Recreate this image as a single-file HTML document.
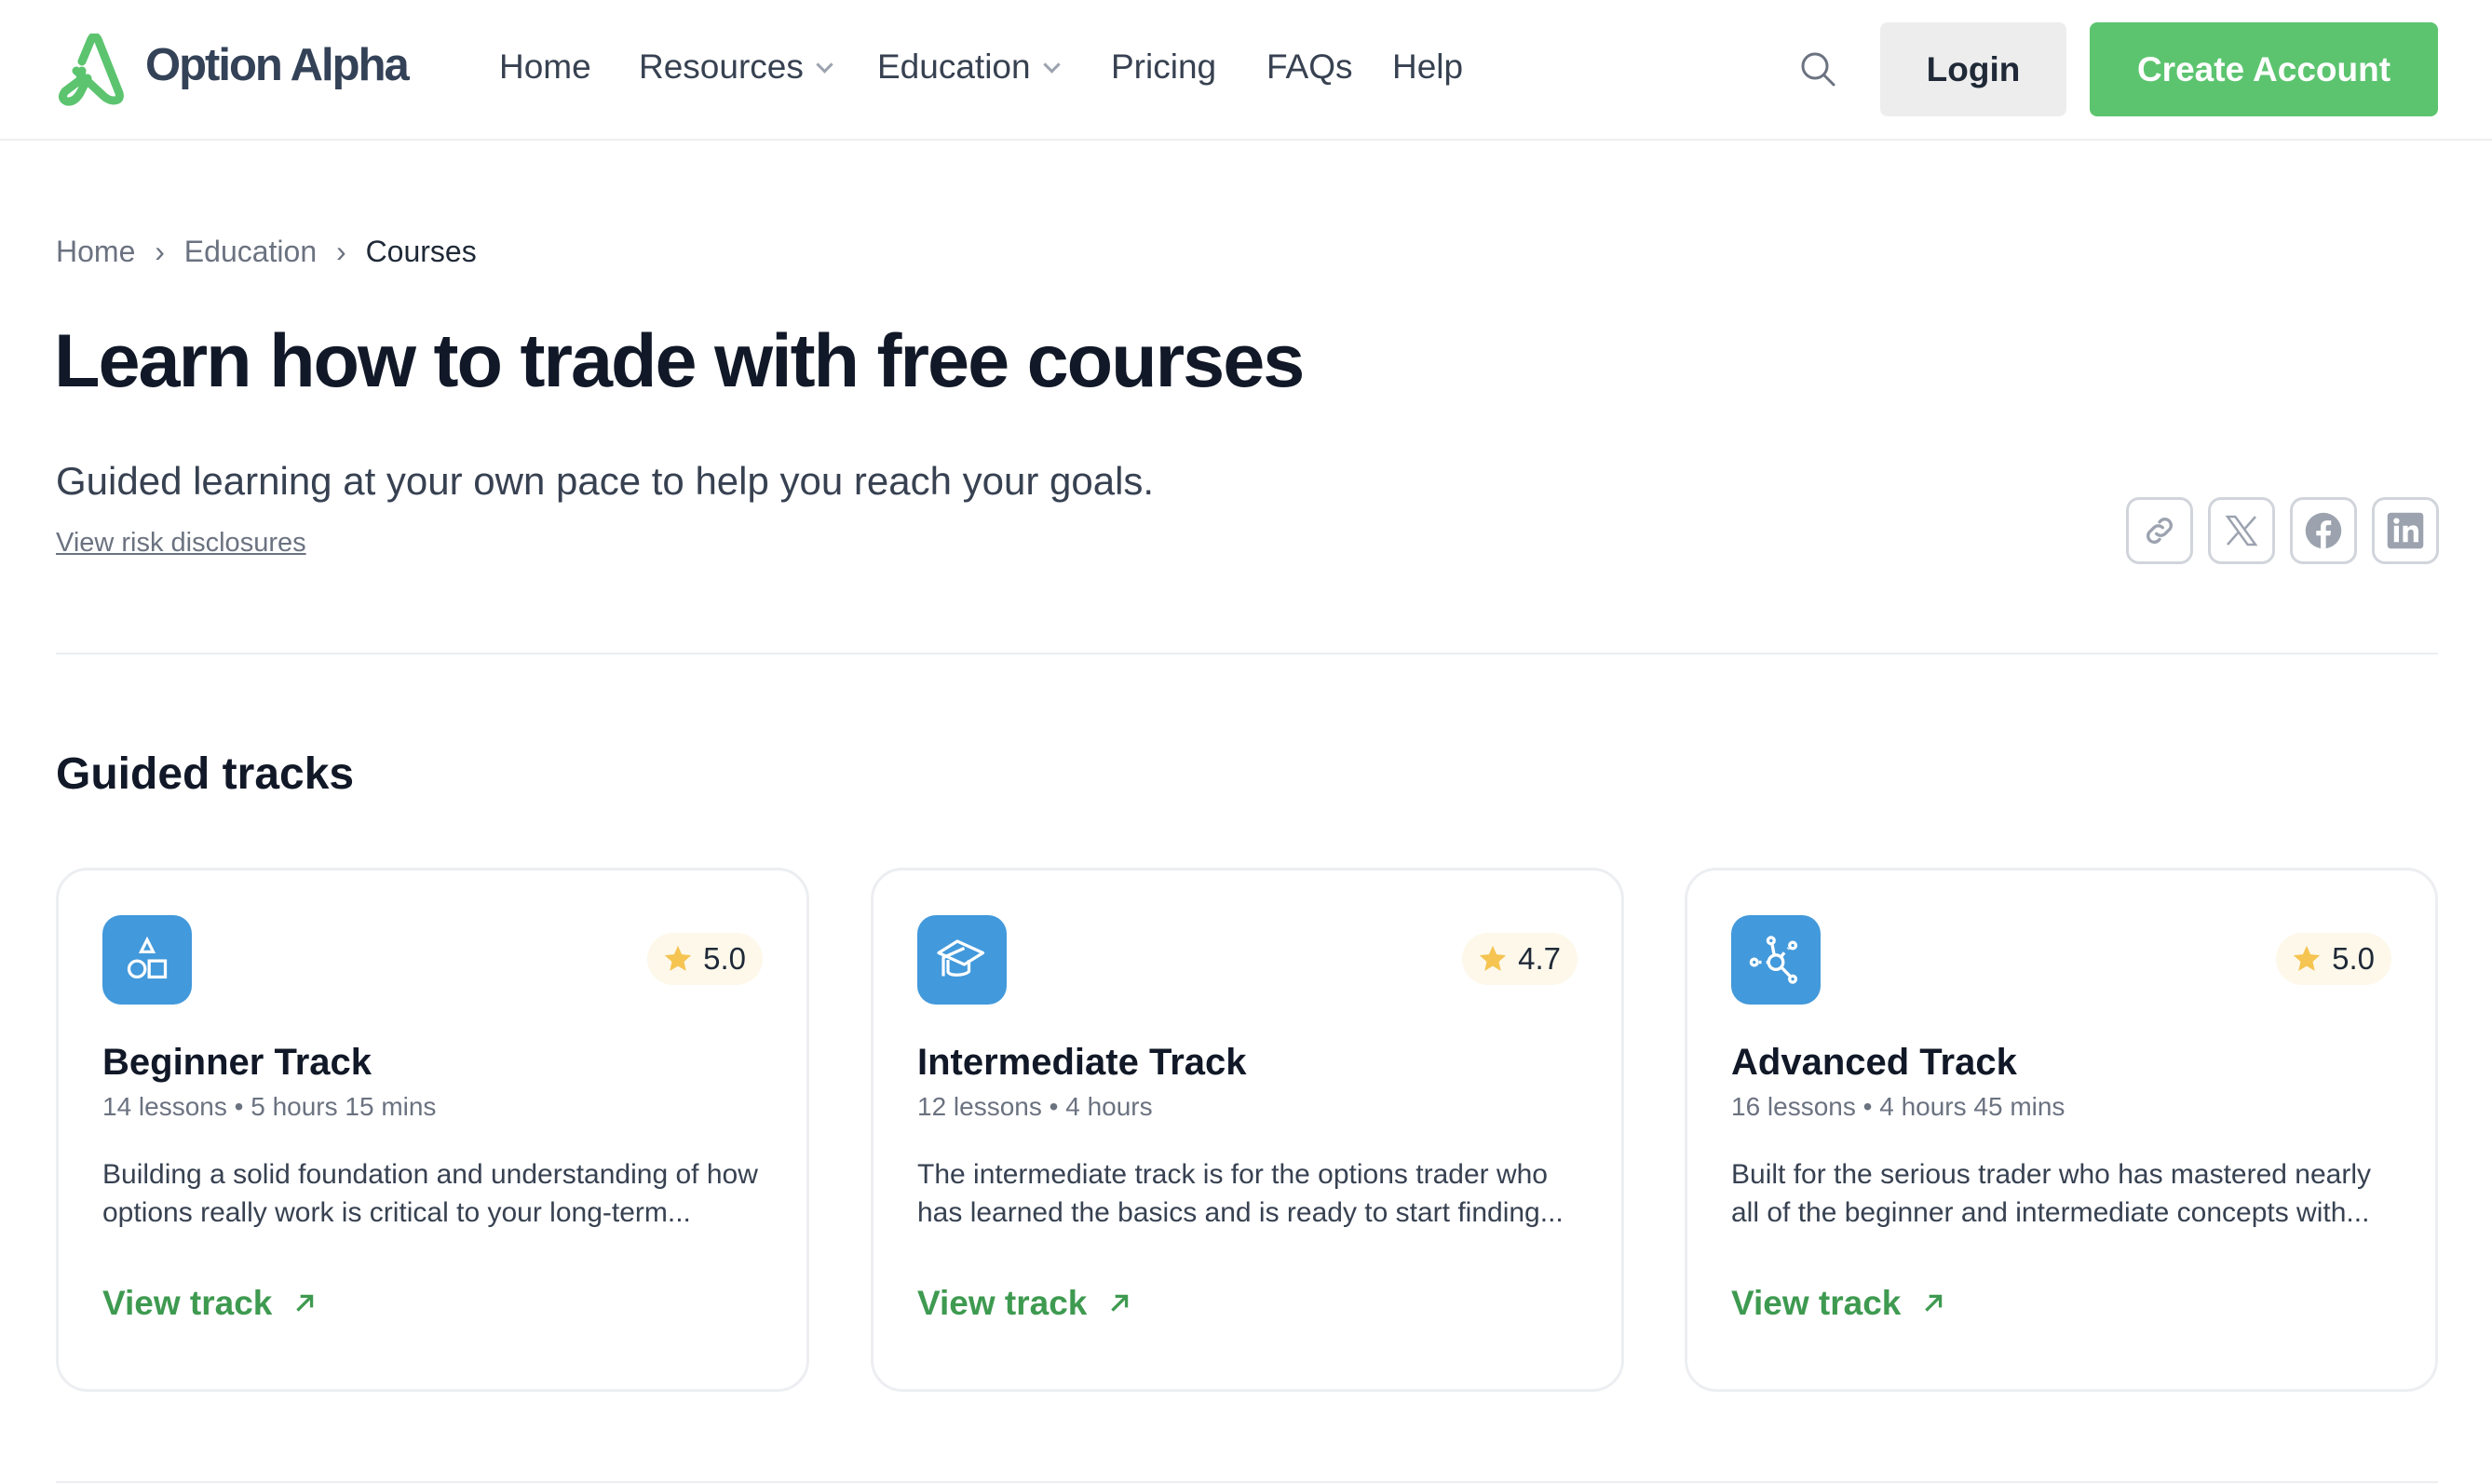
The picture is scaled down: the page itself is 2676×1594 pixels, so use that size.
<!DOCTYPE html>
<html><head><meta charset="utf-8"><style>
*{box-sizing:border-box;margin:0;padding:0}
body{width:2676px;height:1594px;overflow:hidden;background:#fff;font-family:"Liberation Sans",sans-serif;color:#111827;position:relative}
.abs{position:absolute}
header{position:absolute;left:0;top:0;width:2676px;height:151px;border-bottom:2px solid #eeeeee}
.nav{position:absolute;top:51px;font-size:37px;color:#374151;white-space:nowrap}
.chev{display:inline-block;width:13px;height:13px;border-right:3px solid #9ca3af;border-bottom:3px solid #9ca3af;transform:rotate(45deg);margin-left:16px;position:relative;top:-8px}
.btn{position:absolute;top:24px;height:101px;border-radius:8px;font-size:37px;display:flex;align-items:center;justify-content:center;font-weight:bold}
.share{position:absolute;top:534px;width:72px;height:72px;border:3px solid #d1d5db;border-radius:14px;display:flex;align-items:center;justify-content:center}
.card{position:absolute;top:932px;width:809px;height:563px;border:3px solid #eceef1;border-radius:34px}
.ic{position:absolute;left:47px;top:48px;width:96px;height:96px;border-radius:20px;background:#4299db;display:flex;align-items:center;justify-content:center}
.pill{position:absolute;right:47px;top:67px;height:56px;padding:0 18px 0 16px;border-radius:28px;background:#fdf8ea;display:flex;align-items:center;font-size:33px;color:#1f2937}
.pill svg{margin-right:10px}
.t{position:absolute;left:47px;top:184px;font-size:40px;font-weight:bold;color:#111827}
.m{position:absolute;left:47px;top:238px;font-size:28px;color:#6b7280}
.d{position:absolute;left:47px;top:306px;width:720px;font-size:30px;line-height:41px;color:#374151}
.v{position:absolute;left:47px;top:444px;font-size:37px;color:#3e9a50;font-weight:bold;display:flex;align-items:center}
.v svg{margin-left:22px}
</style></head><body>
<header>
<svg class="abs" style="left:58px;top:36px" width="84" height="78" viewBox="0 0 84 78"><path d="M30 30 L40 6 Q43 0 47 6 L70 64 Q72 72 64 72 Q58 72 52 66 L24 40 M30 40 L28 50 Q20 56 12 62 Q6 70 14 73 Q22 74 28 64 L36 48" fill="none" stroke="#5cc46f" stroke-width="9" stroke-linecap="round" stroke-linejoin="round"/></svg>
<div class="abs" style="left:156px;top:42px;font-size:49px;font-weight:bold;color:#344258;letter-spacing:-2px">Option Alpha</div>
<div class="nav" style="left:536px">Home</div>
<div class="nav" style="left:686px">Resources<span class="chev"></span></div>
<div class="nav" style="left:942px">Education<span class="chev"></span></div>
<div class="nav" style="left:1193px">Pricing</div>
<div class="nav" style="left:1360px">FAQs</div>
<div class="nav" style="left:1495px">Help</div>
<svg class="abs" style="left:1932px;top:54px" width="40" height="40" viewBox="0 0 40 40"><circle cx="17" cy="17" r="13" fill="none" stroke="#6b7280" stroke-width="3"/><path d="M27 27 L37 37" stroke="#6b7280" stroke-width="3" stroke-linecap="round"/></svg>
<div class="btn" style="left:2019px;width:200px;background:#ededed;color:#1f2937">Login</div>
<div class="btn" style="left:2244px;width:374px;background:#5cc46f;color:#fff">Create Account</div>
</header>
<div class="abs" style="left:60px;top:252px;font-size:32px;color:#6b7280;white-space:nowrap">Home <span style="margin:0 12px">&#8250;</span> Education <span style="margin:0 12px">&#8250;</span> <span style="color:#1f2937">Courses</span></div>
<div class="abs" style="left:58px;top:342px;font-size:81px;font-weight:bold;letter-spacing:-2px;color:#111827;white-space:nowrap">Learn how to trade with free courses</div>
<div class="abs" style="left:60px;top:493px;font-size:42px;color:#374151;white-space:nowrap">Guided learning at your own pace to help you reach your goals.</div>
<div class="abs" style="left:60px;top:567px;font-size:29px;color:#6b7280;text-decoration:underline">View risk disclosures</div>
<div class="share" style="left:2283px"><svg width="40" height="40" viewBox="0 0 24 24" fill="none" stroke="#9ca3af" stroke-width="2" stroke-linecap="round"><path d="M10 14a4 4 0 0 0 5.6 0l3-3a4 4 0 0 0-5.6-5.6l-1 1"/><path d="M14 10a4 4 0 0 0-5.6 0l-3 3a4 4 0 0 0 5.6 5.6l1-1"/></svg></div>
<div class="share" style="left:2371px"><svg width="40" height="40" viewBox="0 0 24 24" fill="none" stroke="#9ca3af" stroke-width="1.5"><path d="M3 3h5l13 18h-5z"/><path d="M21 3 13.5 11.5M3 21l7.5-8.5"/></svg></div>
<div class="share" style="left:2459px"><svg width="42" height="42" viewBox="0 0 24 24"><circle cx="12" cy="12" r="11" fill="#9ca3af"/><path d="M13.5 23v-8h2.7l.4-3h-3.1v-2c0-.9.3-1.5 1.5-1.5h1.7V5.8c-.3 0-1.3-.1-2.4-.1-2.4 0-4 1.5-4 4.1V12H7.6v3h2.7v8z" fill="#fff"/></svg></div>
<div class="share" style="left:2547px"><svg width="42" height="42" viewBox="0 0 24 24"><rect x="1" y="1" width="22" height="22" rx="2" fill="#9ca3af"/><rect x="5" y="9" width="3" height="10" fill="#fff"/><circle cx="6.5" cy="6" r="1.8" fill="#fff"/><path d="M10.5 9h3v1.5c.6-1 1.7-1.8 3.3-1.8 2.4 0 3.2 1.6 3.2 4V19h-3v-5.5c0-1.3-.4-2.2-1.6-2.2s-1.9.9-1.9 2.2V19h-3z" fill="#fff"/></svg></div>
<div class="abs" style="left:60px;top:701px;width:2558px;height:2px;background:#eceef1"></div>
<div class="abs" style="left:60px;top:804px;font-size:48px;font-weight:bold;color:#111827">Guided tracks</div>

<div class="card" style="left:60px">
<div class="ic"><svg width="52" height="52" viewBox="0 0 24 24" fill="none" stroke="#fff" stroke-width="1.5"><path d="M12 2 15 8H9z"/><circle cx="7" cy="16.5" r="4"/><rect x="13" y="12.5" width="8" height="8"/></svg></div>
<div class="pill"><svg width="34" height="34" viewBox="0 0 24 24"><path d="M12 2l2.9 6.6 7.1.7-5.4 4.8 1.6 7-6.2-3.7-6.2 3.7 1.6-7L2 9.3l7.1-.7z" fill="#f5c451"/></svg>5.0</div>
<div class="t">Beginner Track</div>
<div class="m">14 lessons • 5 hours 15 mins</div>
<div class="d">Building a solid foundation and understanding of how options really work is critical to your long-term...</div>
<div class="v">View track<svg width="26" height="26" viewBox="0 0 24 24" fill="none" stroke="#3e9a50" stroke-width="3"><path d="M5 19 19 5M8 5h11v11"/></svg></div>
</div>
<div class="card" style="left:935px">
<div class="ic"><svg width="60" height="60" viewBox="0 0 24 24" fill="none" stroke="#fff" stroke-width="1.3" stroke-linejoin="round"><path d="M2 9l8-5 11 5-8 5z"/><path d="M13 7l-9 4v8"/><path d="M6 12v5c0 2 7 2 9 0v-5"/></svg></div>
<div class="pill"><svg width="34" height="34" viewBox="0 0 24 24"><path d="M12 2l2.9 6.6 7.1.7-5.4 4.8 1.6 7-6.2-3.7-6.2 3.7 1.6-7L2 9.3l7.1-.7z" fill="#f5c451"/></svg>4.7</div>
<div class="t">Intermediate Track</div>
<div class="m">12 lessons • 4 hours</div>
<div class="d">The intermediate track is for the options trader who has learned the basics and is ready to start finding...</div>
<div class="v">View track<svg width="26" height="26" viewBox="0 0 24 24" fill="none" stroke="#3e9a50" stroke-width="3"><path d="M5 19 19 5M8 5h11v11"/></svg></div>
</div>
<div class="card" style="left:1809px">
<div class="ic"><svg width="62" height="62" viewBox="0 0 24 24" fill="none" stroke="#fff" stroke-width="1.3"><circle cx="12" cy="13" r="3"/><circle cx="10" cy="4" r="1.3"/><circle cx="19" cy="6" r="1.3"/><circle cx="3" cy="13" r="1.3"/><circle cx="19" cy="20" r="1.3"/><path d="M10.4 5.3 11.3 10M14 11l1.5-2M17 7.5l.3-.3M5 13h1M8 13h1M14.2 15l3.9 4"/></svg></div>
<div class="pill"><svg width="34" height="34" viewBox="0 0 24 24"><path d="M12 2l2.9 6.6 7.1.7-5.4 4.8 1.6 7-6.2-3.7-6.2 3.7 1.6-7L2 9.3l7.1-.7z" fill="#f5c451"/></svg>5.0</div>
<div class="t">Advanced Track</div>
<div class="m">16 lessons • 4 hours 45 mins</div>
<div class="d">Built for the serious trader who has mastered nearly all of the beginner and intermediate concepts with...</div>
<div class="v">View track<svg width="26" height="26" viewBox="0 0 24 24" fill="none" stroke="#3e9a50" stroke-width="3"><path d="M5 19 19 5M8 5h11v11"/></svg></div>
</div>
<div class="abs" style="left:60px;top:1591px;width:2558px;height:2px;background:#eceef1"></div>
</body></html>
